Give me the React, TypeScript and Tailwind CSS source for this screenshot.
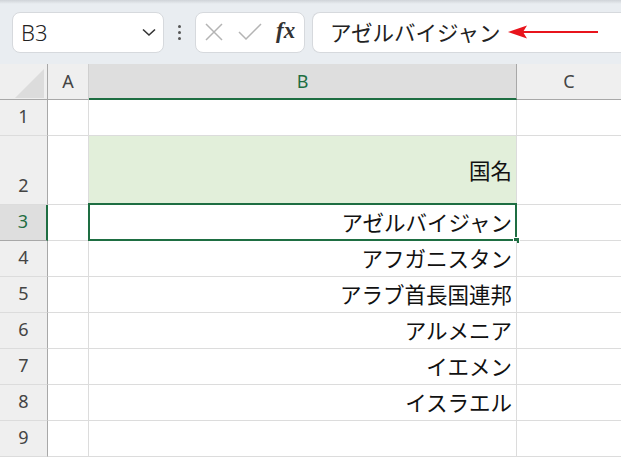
import React from 'react';

const font = "font-['Noto_Sans','Noto_Sans_CJK_JP',sans-serif]";
const jp = "font-['Noto_Sans_CJK_JP','Noto_Sans',sans-serif]";

const rows: { n: number; h: string; text?: string; fill?: boolean; sel?: boolean }[] = [
  { n: 1, h: 'h-[36px]' },
  { n: 2, h: 'h-[69px]', text: '国名', fill: true },
  { n: 3, h: 'h-[36px]', text: 'アゼルバイジャン', sel: true },
  { n: 4, h: 'h-[36px]', text: 'アフガニスタン' },
  { n: 5, h: 'h-[36px]', text: 'アラブ首長国連邦' },
  { n: 6, h: 'h-[36px]', text: 'アルメニア' },
  { n: 7, h: 'h-[36px]', text: 'イエメン' },
  { n: 8, h: 'h-[36px]', text: 'イスラエル' },
  { n: 9, h: 'h-[36px]' },
];

const FormulaBar: React.FC = () => (
  <div className="relative h-[64px] bg-[#e9edf1] flex items-center pl-[12px]">
    <div className="absolute top-0 left-0 right-0 h-[4px] bg-gradient-to-b from-[#cfd3d8] to-transparent" />
    <div className="w-[152px] h-[41px] bg-white border border-[#d6d9dd] rounded-[8px] flex items-center justify-between pl-[8px] pr-[6px]">
      <span className={`${font} text-[22px] text-[#222] font-light`}>B3</span>
      <svg width="16" height="16" viewBox="0 0 16 16" fill="none" stroke="#333" strokeWidth="1.6">
        <path d="M2 5.5 L8 11 L14 5.5" />
      </svg>
    </div>
    <div className="w-[31px] flex flex-col items-center gap-[3px]">
      <span className="w-[3px] h-[3px] rounded-full bg-[#555]" />
      <span className="w-[3px] h-[3px] rounded-full bg-[#555]" />
      <span className="w-[3px] h-[3px] rounded-full bg-[#555]" />
    </div>
    <div className="w-[110px] h-[41px] bg-white border border-[#d6d9dd] rounded-[8px] flex items-center pl-[8px] gap-[14px]">
      <svg width="20" height="20" viewBox="0 0 20 20" stroke="#b4b4b4" strokeWidth="1.5">
        <path d="M2 2 L18 18 M18 2 L2 18" />
      </svg>
      <svg width="24" height="18" viewBox="0 0 24 18" fill="none" stroke="#b4b4b4" strokeWidth="1.5">
        <path d="M1 9 L8 16 L23 1" />
      </svg>
      <span className="font-['Liberation_Serif',serif] italic font-bold text-[23px] text-[#333] leading-none -mt-[3px]">fx</span>
    </div>
    <div className="ml-[7px] flex-1 h-[41px] bg-white border border-[#d6d9dd] rounded-l-[8px] border-r-0 flex items-center pl-[17px]">
      <span className={`${jp} text-[21.5px] text-[#222]`}>アゼルバイジャン</span>
      <svg width="92" height="14" viewBox="0 0 92 14" className="ml-[7px]">
        <path d="M0 7 L19 0.5 L15 7 L19 13.5 Z" fill="#e8141c" />
        <path d="M14 7 L90 7" stroke="#e8141c" strokeWidth="2" />
      </svg>
    </div>
  </div>
);

const Sheet: React.FC = () => (
  <div className="grid grid-cols-[48px_41px_428px_1fr]">
    <div className="h-[36px] bg-[#efefef] border-r border-b border-[#a8a8a8] relative">
      <svg width="29" height="29" viewBox="0 0 29 29" className="absolute left-[15px] top-[5px]">
        <path d="M29 0 L29 29 L0 29 Z" fill="#dcdcdc" />
      </svg>
    </div>
    <div className={`h-[36px] bg-[#efefef] border-r border-b border-r-[#cfcfcf] border-b-[#a8a8a8] flex items-center justify-center ${font} text-[18px] text-[#444]`}>A</div>
    <div className={`h-[36px] bg-[#dedede] border-r border-r-[#a8a8a8] border-b-2 border-b-[#1e6e42] flex items-center justify-center ${font} text-[18px] text-[#1e6e42]`}>B</div>
    <div className={`h-[36px] bg-[#efefef] border-b border-[#a8a8a8] flex items-center justify-center ${font} text-[18px] text-[#444]`}>C</div>
    {rows.map((r) => (
      <React.Fragment key={r.n}>
        <div
          className={`${r.h} flex items-end justify-center pb-[5px] ${font} text-[18px] border-b ${
            r.sel
              ? 'bg-[#dedede] text-[#1e6e42] border-r-2 border-r-[#1e6e42] border-b-[#a8a8a8]'
              : 'bg-[#efefef] text-[#444] border-r border-r-[#a8a8a8] border-b-[#dcdcdc]'
          }`}
        >
          {r.n}
        </div>
        <div className={`${r.h} bg-white border-r border-b border-[#dcdcdc]`} />
        <div
          className={`${r.h} relative border-r border-b border-[#dcdcdc] flex items-center justify-end pr-[4px] ${jp} text-[21.5px] text-[#111] ${
            r.fill ? 'bg-[#e2efda]' : 'bg-white'
          }`}
        >
          {r.text}
          {r.sel && (
            <>
              <div className="absolute -top-[2px] -left-[1px] -right-[1px] -bottom-[1px] border-2 border-[#1e6e42] pointer-events-none" />
              <div className="absolute -right-[4px] -bottom-[4px] w-[7px] h-[7px] bg-[#1e6e42] border border-white" />
            </>
          )}
        </div>
        <div className={`${r.h} bg-white border-b border-[#dcdcdc]`} />
      </React.Fragment>
    ))}
  </div>
);

export default function App() {
  return (
    <div className="w-[621px] h-[457px] overflow-hidden bg-white">
      <FormulaBar />
      <Sheet />
    </div>
  );
}
